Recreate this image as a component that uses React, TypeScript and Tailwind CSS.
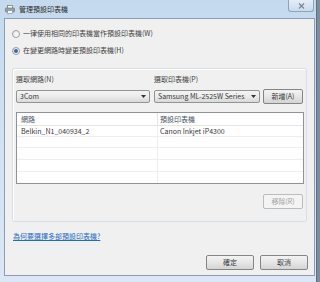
const font = "font-['Noto_Sans_CJK_TC','Noto_Sans',sans-serif]";

function PrinterIcon() {
  return (
    <svg width="10" height="9" viewBox="0 0 10 9" className="shrink-0">
      <rect x="2.5" y="0.5" width="5" height="3" fill="#fff" stroke="#7b838d" strokeWidth="0.8" />
      <rect x="0.5" y="3" width="9" height="4" rx="0.8" fill="#9aa3ad" stroke="#5f6872" strokeWidth="0.6" />
      <rect x="2.5" y="5.5" width="5" height="3" fill="#fff" stroke="#7b838d" strokeWidth="0.6" />
    </svg>
  );
}

function Radio({ checked, label }: { checked?: boolean; label: string }) {
  return (
    <div className="flex h-[11px] items-center gap-[3px] pl-[7px]">
      <span className="flex h-[8px] w-[8px] items-center justify-center rounded-full border border-[#9a9b9b] bg-gradient-to-br from-[#e6e6e6] to-[#ffffff]">
        {checked && <span className="h-[4px] w-[4px] rounded-full bg-[#3567ad]" />}
      </span>
      <span className="text-[7px] leading-none text-[#444444]">{label}</span>
    </div>
  );
}

function Combo({ value, width }: { value: string; width: string }) {
  return (
    <div
      className={`${width} flex h-[13px] items-center justify-between rounded-[2px] border border-[#929393] bg-gradient-to-b from-[#f4f4f4] via-[#ebebeb] to-[#d9d9d9] pl-[3px] pr-[3px]`}
    >
      <span className="text-[7px] leading-none text-[#383838]">{value}</span>
      <svg width="5" height="3" viewBox="0 0 5 3">
        <path d="M0 0H5L2.5 3Z" fill="#333" />
      </svg>
    </div>
  );
}

function Button({ label, width, disabled }: { label: string; width: string; disabled?: boolean }) {
  return (
    <div
      className={`${width} flex h-[15px] items-center justify-center rounded-[2px] border text-[7px] leading-none ${
        disabled
          ? 'border-[#b9bdc0] bg-[#f4f4f4] text-[#a0a0a0]'
          : 'border-[#858585] bg-gradient-to-b from-[#f3f3f3] via-[#e6e6e6] to-[#d4d4d4] text-[#383838]'
      }`}
    >
      {label}
    </div>
  );
}

const rows = [
  { h: 'h-[11px]', net: 'Belkin_N1_040934_2', printer: 'Canon Inkjet iP4300' },
  { h: 'h-[11px]', net: '', printer: '' },
  { h: 'h-[12px]', net: '', printer: '' },
  { h: 'h-[12px]', net: '', printer: '' },
  { h: 'h-[11px]', net: '', printer: '' },
];

export default function App() {
  return (
    <div className={`${font} flex h-[282px] w-[320px] overflow-hidden bg-[#7f8c9c]`}>
      <div className="flex h-[282px] w-[317px] flex-col border-r border-[#5c6f88] bg-gradient-to-b from-[#c5d9ee] via-[#d3e2f2] to-[#dbe7f4]">
        <div className="flex h-[18px] shrink-0 items-start justify-between">
          <div className="flex items-center gap-[4px] pl-[5px] pt-[5px]">
            <PrinterIcon />
            <span className="text-[7px] leading-none text-[#2a2a2a]">管理預設印表機</span>
          </div>
          <div className="mr-[2px] flex h-[12px] w-[26px] items-center justify-center rounded-b-[3px] border border-t-0 border-[#8ea3bd] bg-gradient-to-b from-[#e4edf7] to-[#cbdbec]">
            <svg width="7" height="6" viewBox="0 0 7 6">
              <path d="M1 0.5L6 5.5M6 0.5L1 5.5" stroke="#7a8593" strokeWidth="1.2" />
            </svg>
          </div>
        </div>

        <div className="ml-[4px] mr-[1px] flex flex-col border border-[#8a9db5] bg-[#f0f0f0]">
          <div className="pt-[9px]">
            <Radio label="一律使用相同的印表機當作預設印表機(W)" />
          </div>
          <div className="mt-[6px]">
            <Radio checked label="在變更網路時變更預設印表機(H)" />
          </div>

          <div className="ml-[7px] mr-[7px] mt-[12px] flex flex-col rounded-[2px] border border-[#d5dfe5] pb-[12px] pl-[3px] pr-[2px] pt-[5px] shadow-[inset_1px_1px_0_#ffffff]">
            <div className="flex h-[11px] items-center">
              <span className="w-[138px] text-[7px] leading-none text-[#444444]">選取網路(N)</span>
              <span className="text-[7px] leading-none text-[#444444]">選取印表機(P)</span>
            </div>
            <div className="mt-[4px] flex h-[15px] items-center gap-[4px]">
              <Combo value="3Com" width="w-[134px]" />
              <Combo value="Samsung ML-2525W Series" width="w-[106px]" />
              <div className="ml-[-1px]">
                <Button label="新增(A)" width="w-[40px]" />
              </div>
            </div>

            <div className="mt-[8px] flex h-[72px] w-[288px] flex-col border border-[#8e939a] bg-white">
              <div className="flex h-[13px] shrink-0 border-b border-[#e5e5e5] text-[7px] leading-none text-[#4a5566]">
                <div className="flex w-[141px] items-center border-r border-[#e3e3e3] pl-[4px]">網路</div>
                <div className="flex items-center pl-[2px]">預設印表機</div>
              </div>
              {rows.map((r, i) => (
                <div key={i} className={`${r.h} flex shrink-0 border-b border-[#eeeeee] text-[7px] leading-none text-[#383838] last:border-b-0`}>
                  <div className="flex w-[141px] items-center border-r border-[#eeeeee] pl-[4px]">{r.net}</div>
                  <div className="flex items-center pl-[2px]">{r.printer}</div>
                </div>
              ))}
            </div>

            <div className="mt-[10px] flex justify-end pr-[1px]">
              <Button label="移除(R)" width="w-[40px]" disabled />
            </div>
          </div>

          <div className="ml-[8px] mt-[9px] flex h-[11px] items-center">
            <span className="text-[7px] leading-none text-[#2469c2] underline">為何要選擇多部預設印表機?</span>
          </div>

          <div className="mb-[5px] mt-[13px] flex justify-end gap-[6px] pr-[6px]">
            <Button label="確定" width="w-[48px]" />
            <Button label="取消" width="w-[48px]" />
          </div>
        </div>
      </div>
    </div>
  );
}
